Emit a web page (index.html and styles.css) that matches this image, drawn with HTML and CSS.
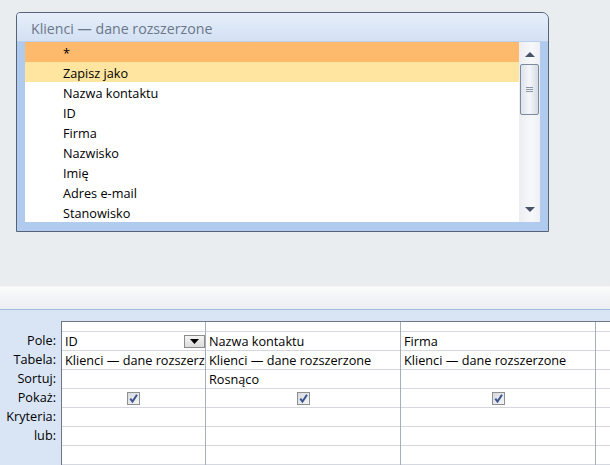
FILE: index.html
```html
<!DOCTYPE html>
<html lang="pl">
<head>
<meta charset="utf-8">
<title>Kwerenda</title>
<link rel="stylesheet" href="styles.css">
</head>
<body>
<div class="page">
  <div class="canvas">
    <div class="tablewin">
      <div class="title">Klienci — dane rozszerzone</div>
      <div class="winbody">
        <div class="strip"></div>
        <ul class="fields">
          <li class="sel1">*</li>
          <li class="sel2">Zapisz jako</li>
          <li>Nazwa kontaktu</li>
          <li>ID</li>
          <li>Firma</li>
          <li>Nazwisko</li>
          <li>Imię</li>
          <li>Adres e-mail</li>
          <li>Stanowisko</li>
        </ul>
        <div class="scroll">
          <div class="arrow up"></div>
          <div class="thumb"><span></span><span></span><span></span></div>
          <div class="track"></div>
          <div class="arrow down"></div>
        </div>
        <div class="strip"></div>
      </div>
      <div class="bottomstrip"></div>
    </div>
  </div>
  <div class="splitter"></div>
  <div class="design">
    <div class="labels">
      <div class="lab">Pole:</div>
      <div class="lab">Tabela:</div>
      <div class="lab">Sortuj:</div>
      <div class="lab">Pokaż:</div>
      <div class="lab">Kryteria:</div>
      <div class="lab">lub:</div>
    </div>
    <div class="grid">
      <div class="col c1">
        <div class="cell head"></div>
        <div class="cell field">ID<span class="dd"><svg width="9" height="5" viewBox="0 0 9 5"><path d="M0 0H9L4.5 5Z" fill="#000"/></svg></span></div>
        <div class="cell">Klienci — dane rozszerzone</div>
        <div class="cell"></div>
        <div class="cell chk"><span class="box"><svg width="11" height="11" viewBox="0 0 11 11"><path d="M2.3 5.6L4.5 8.6L9 1.8" fill="none" stroke="#3a5590" stroke-width="2"/></svg></span></div>
        <div class="cell"></div>
        <div class="cell"></div>
        <div class="cell"></div>
      </div>
      <div class="col c2">
        <div class="cell head"></div>
        <div class="cell">Nazwa kontaktu</div>
        <div class="cell">Klienci — dane rozszerzone</div>
        <div class="cell">Rosnąco</div>
        <div class="cell chk"><span class="box"><svg width="11" height="11" viewBox="0 0 11 11"><path d="M2.3 5.6L4.5 8.6L9 1.8" fill="none" stroke="#3a5590" stroke-width="2"/></svg></span></div>
        <div class="cell"></div>
        <div class="cell"></div>
        <div class="cell"></div>
      </div>
      <div class="col c3">
        <div class="cell head"></div>
        <div class="cell">Firma</div>
        <div class="cell">Klienci — dane rozszerzone</div>
        <div class="cell"></div>
        <div class="cell chk"><span class="box"><svg width="11" height="11" viewBox="0 0 11 11"><path d="M2.3 5.6L4.5 8.6L9 1.8" fill="none" stroke="#3a5590" stroke-width="2"/></svg></span></div>
        <div class="cell"></div>
        <div class="cell"></div>
        <div class="cell"></div>
      </div>
      <div class="col c4">
        <div class="cell head"></div>
        <div class="cell"></div>
        <div class="cell"></div>
        <div class="cell"></div>
        <div class="cell"></div>
        <div class="cell"></div>
        <div class="cell"></div>
        <div class="cell"></div>
      </div>
    </div>
  </div>
</div>
</body>
</html>
```

FILE: styles.css
```css
* { box-sizing: border-box; }
html, body { margin: 0; padding: 0; }
body {
  width: 610px;
  height: 465px;
  overflow: hidden;
  background: #eaedf0;
  font-family: "Open Sans", "Noto Sans", sans-serif;
  font-size: 12.7px;
  color: #000;
}
.page { display: flex; flex-direction: column; height: 465px; }
.canvas {
  height: 286px;
  padding: 12px 0 0 16px;
}
.tablewin {
  width: 533px;
  height: 220px;
  border: 1px solid #566478;
  border-radius: 4px 7px 0 0;
  background: #b4cdee;
  display: flex;
  flex-direction: column;
  overflow: hidden;
}
.title {
  height: 29px;
  padding: 7px 0 0 14px;
  font-size: 14.2px;
  line-height: 18px;
  color: #6b7789;
  background: linear-gradient(#e6eefa, #d3e1f4);
  border-bottom: 1px solid #bcd0ec;
}
.winbody { display: flex; height: 180px; }
.strip { width: 8px; background: #b1cbee; }
.fields {
  list-style: none;
  margin: 0;
  padding: 0;
  flex: 1;
  background: #fff;
}
.fields li {
  height: 20px;
  line-height: 20px;
  padding: 1px 0 0 38px;
}
.fields li.sel1 { background: #feba6c; }
.fields li.sel2 { background: #ffe5a0; }
.scroll {
  width: 21px;
  background: linear-gradient(90deg, #eceef2, #f7f8fa 60%, #eef0f3);
  display: flex;
  flex-direction: column;
  align-items: center;
}
.arrow { width: 0; height: 0; border-left: 5px solid transparent; border-right: 5px solid transparent; }
.arrow.up { margin-top: 10px; border-bottom: 5px solid #475467; }
.arrow.down { margin-bottom: 10px; border-top: 5px solid #475467; }
.thumb {
  margin-top: 7px;
  width: 19px;
  height: 51px;
  border: 1px solid #7d8a9c;
  border-radius: 2px;
  background: linear-gradient(90deg, #dde3ec, #f4f6f9 50%, #d5dce6);
  display: flex;
  flex-direction: column;
  align-items: center;
  justify-content: center;
  gap: 1px;
}
.thumb span { display: block; width: 7px; height: 1px; background: #8a95a5; }
.track { flex: 1; }
.bottomstrip { height: 9px; background: #b1cbee; }

.splitter {
  height: 24px;
  background: linear-gradient(#fbfbfb, #f3f4f6 50%, #eceef1);
  border-top: 1px solid #f4f5f6;
  border-bottom: 1px solid #9fbbe0;
}
.design {
  flex: 1;
  display: flex;
  background: #d9e5f4;
  padding-top: 11px;
}
.labels {
  width: 61px;
  padding-top: 10px;
}
.lab {
  height: 19px;
  line-height: 18px;
  text-align: right;
  padding-right: 5px;
}
.grid {
  flex: 1;
  display: flex;
  background: #fff;
  border-top: 1px solid #6f7783;
  border-left: 1px solid #6f7783;
}
.col { display: flex; flex-direction: column; border-right: 1px solid #a7aeb8; }
.c1 { width: 144px; }
.c2 { width: 195px; }
.c3 { width: 195px; }
.c4 { flex: 1; border-right: 0; }
.cell {
  height: 19px;
  line-height: 18px;
  border-bottom: 1px solid #d5d9df;
  padding-left: 3px;
  white-space: nowrap;
  overflow: hidden;
  position: relative;
}
.cell.head { height: 10px; }
.dd {
  position: absolute;
  right: 0;
  top: 3px;
  width: 21px;
  height: 13px;
  border: 1px solid #8c8c8c;
  background: linear-gradient(#f4f4f4, #dcdcdc);
  display: flex;
  align-items: center;
  justify-content: center;
}
.chk { display: flex; align-items: center; justify-content: center; padding-left: 0; }
.box {
  width: 13px;
  height: 13px;
  border: 1px solid #8e8f8f;
  background: linear-gradient(135deg, #d6d9de, #f6f6f7);
  display: flex;
  align-items: center;
  justify-content: center;
}
```
